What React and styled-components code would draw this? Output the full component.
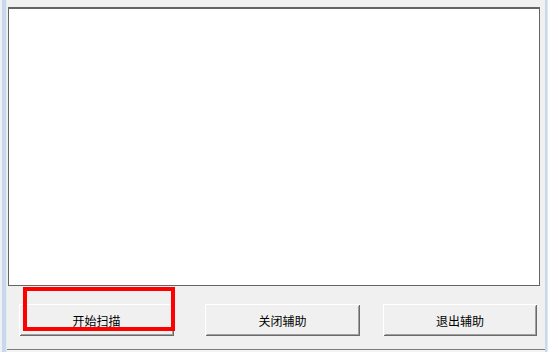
import React from "react";
import styled, { createGlobalStyle } from "styled-components";

const Global = createGlobalStyle`
  html, body { margin: 0; padding: 0; background: #f0f0f0; overflow: hidden; }
  #root { width: 548px; height: 352px; }
`;

const Window = styled.div`
  width: 548px;
  height: 352px;
  display: flex;
  background: #f0f0f0;
  font-family: "Noto Sans CJK SC", "Noto Sans", sans-serif;
`;

const FrameEdge = styled.div`
  flex: 0 0 ${(p) => p.$w}px;
  background: ${(p) => p.$bg};
`;

const Client = styled.div`
  flex: 1;
  display: flex;
  flex-direction: column;
  padding-top: 7px;
  padding-left: 1px;
  padding-right: 5px;
`;

const LogBox = styled.div`
  height: 279px;
  box-sizing: border-box;
  background: #ffffff;
  border: 1px solid #646464;
  border-top-width: 2px;
  border-left-width: 1px;
  flex: 0 0 auto;
`;

const ButtonRow = styled.div`
  display: flex;
  align-items: flex-start;
  padding-top: 18px;
  height: 45px;
  box-sizing: border-box;
  margin-left: -1px;
  margin-right: -5px;
`;

const BottomLine = styled.div`
  height: 3px;
  margin-left: -1px;
  margin-right: -5px;
  border-top: 1px solid #7c7c7c;
  background: #f4f4f4;
  box-sizing: border-box;
`;

const Spacer = styled.div`
  flex: 1;
`;

const ButtonWrap = styled.div`
  position: relative;
  margin-left: ${(p) => p.$ml}px;
`;

const Button = styled.button`
  width: ${(p) => p.$w}px;
  height: 32px;
  box-sizing: border-box;
  margin: 0;
  padding: 0;
  border: none;
  background: #f0f0f0;
  box-shadow: inset 1px 1px 0 #ffffff, inset -1px -1px 0 #6a6a6a,
    inset 2px 2px 0 #f0f0f0, inset -2px -2px 0 #a0a0a0;
  font-family: "Noto Sans CJK SC", "Noto Sans", sans-serif;
  font-size: 12px;
  color: #000;
  padding-top: 2px;
  line-height: 14px;
`;

const Highlight = styled.div`
  position: absolute;
  left: 4px;
  top: -17px;
  width: 152px;
  height: 44px;
  box-sizing: border-box;
  border: 4px solid #ff0000;
  pointer-events: none;
`;

export default function App() {
  return (
    <>
      <Global />
      <Window>
        <FrameEdge
          $w={7}
          $bg="linear-gradient(to right, #eef1f5 0 2px, #c9d8ea 2px 6px, #e6ebf1 6px 7px)"
        />
        <Client>
          <LogBox />
          <ButtonRow>
            <ButtonWrap $ml={12}>
              <Button $w={155}>开始扫描</Button>
              <Highlight />
            </ButtonWrap>
            <ButtonWrap $ml={31}>
              <Button $w={155}>关闭辅助</Button>
            </ButtonWrap>
            <ButtonWrap $ml={23}>
              <Button $w={154}>退出辅助</Button>
            </ButtonWrap>
          </ButtonRow>
          <Spacer />
          <BottomLine />
        </Client>
        <FrameEdge
          $w={3}
          $bg="linear-gradient(to right, #c9d8ea 0 2px, #dfe7f1 2px 3px)"
        />
      </Window>
    </>
  );
}
